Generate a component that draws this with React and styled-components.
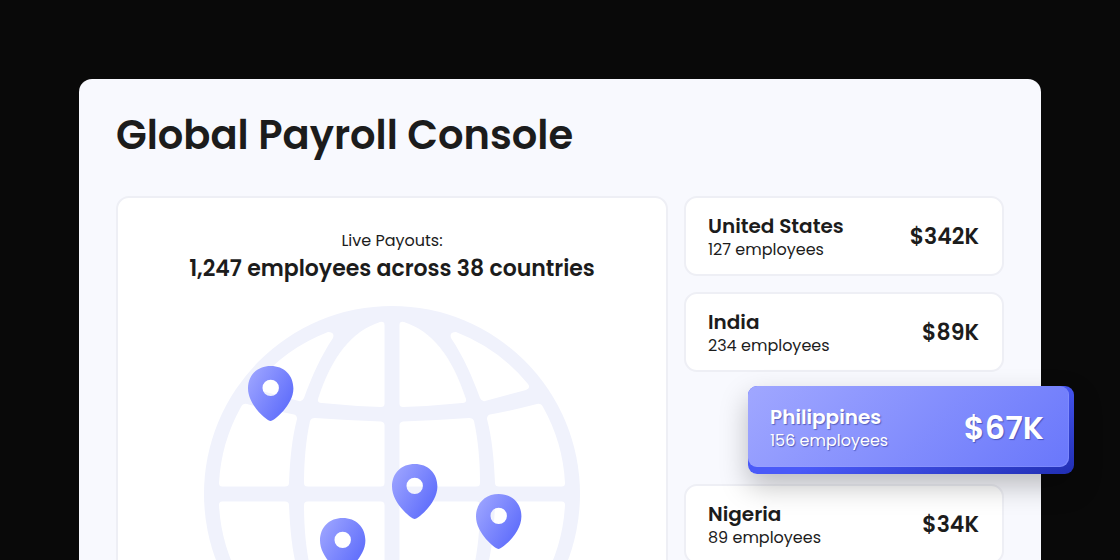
import React from "react";
import styled, { createGlobalStyle, css } from "styled-components";

const GlobalStyle = createGlobalStyle`
  * {
    box-sizing: border-box;
  }

  body {
    margin: 0;
    background: #090909;
    color: #1c1c1c;
    font-family: Poppins, Inter, "Open Sans", sans-serif;
  }
`;

const Page = styled.div`
  padding: 79px;
`;

const Console = styled.main`
  padding: 32px 37px 37px;
  border-radius: 13px;
  background: #f8f9fe;
`;

const Title = styled.h1`
  margin: 0 0 37px;
  font-size: 40px;
  font-weight: 600;
  line-height: 48px;
`;

const Columns = styled.div`
  display: grid;
  grid-template-columns: minmax(0, 1fr) 320px;
  gap: 16px;
`;

const box = css`
  border: 2px solid #eeeff5;
  border-radius: 13px;
  background: #fff;
`;

const Payouts = styled.section`
  ${box}
  display: flex;
  flex-direction: column;
  align-items: center;
  padding: 31px 24px;
`;

const PayoutsLabel = styled.p`
  margin: 0;
  font-size: 16px;
  line-height: 24px;
`;

const PayoutsTotal = styled.h2`
  margin: 0 0 21px;
  font-size: 22px;
  font-weight: 600;
  line-height: 32px;
`;

const WorldMap = styled.div`
  position: relative;
  width: 376px;
  height: 376px;

  > svg {
    display: block;
  }
`;

const PinIcon = styled.svg`
  position: absolute;
  left: ${(props) => props.$x}px;
  top: ${(props) => props.$y}px;
`;

const Countries = styled.ul`
  display: flex;
  flex-direction: column;
  gap: 16px;
  margin: 0;
  padding: 0;
  list-style: none;
`;

const Country = styled.li`
  ${box}
  display: flex;
  align-items: center;
  justify-content: space-between;
  height: 80px;
  padding: 2px 23px 0 22px;
`;

/* raised card, hangs out of the console on the right */
const Highlighted = styled.li`
  position: relative;
  height: 88px;
  margin: -2px -70px -6px 64px;
  padding: 0 5px 7px 0;
  border-radius: 9px;
  background: linear-gradient(160deg, #4a5af8 50%, #202eb2 100%);
  box-shadow: 0 12px 28px rgba(0, 0, 0, 0.25);
`;

const Face = styled.div`
  display: flex;
  align-items: center;
  justify-content: space-between;
  height: 100%;
  padding: 2px 25px 0 22px;
  border-radius: 9px;
  background: linear-gradient(135deg, #a0a7ff 0%, #6977fb 100%);
  box-shadow: inset -1px -1px 0 rgba(160, 170, 255, 0.3);
  color: #fff;
  text-shadow: 1px 1px 1px rgba(30, 40, 130, 0.5);
`;

const Name = styled.div`
  font-size: 20px;
  font-weight: 600;
  line-height: 26px;
`;

const Employees = styled.div`
  font-size: 16px;
  line-height: 22px;
`;

const Amount = styled.div`
  font-size: ${(props) => (props.$large ? 32 : 22)}px;
  font-weight: 600;
  line-height: 32px;
`;

const countries = [
  { name: "United States", employees: 127, amount: "$342K" },
  { name: "India", employees: 234, amount: "$89K" },
  { name: "Philippines", employees: 156, amount: "$67K", highlighted: true },
  { name: "Nigeria", employees: 89, amount: "$34K" },
];

const pins = [
  { x: 44, y: 60 },
  { x: 188, y: 158 },
  { x: 272, y: 188 },
  { x: 116, y: 212 },
];

const Globe = () => (
  <svg width="376" height="376" viewBox="-188 -188 376 376" aria-hidden="true">
    <defs>
      <g id="quarter" fill="#fff">
        <path d="M7.5-169Q7.5-173 12-172C40-163 60-138 74-95Q75-91 70-91Q40-88 11-87Q7.5-87 7.5-90Z" />
        <path d="M59-156Q57-162 64-162A173.5 173.5 0 0 1 136-110Q139-106 134-104L93-93Q90-92 88-96C80-118 71-138 59-156Z" />
        <path d="M7.5-69Q7.5-72 11-72.5Q45-74 77-76Q81-76 82-73C86-55 88-33 88-11Q88-7.5 84.5-7.5H11Q7.5-7.5 7.5-11Z" />
        <path d="M98-79.5Q122-84 145-90Q149-91 151-87A173.5 173.5 0 0 1 173-11Q173-7.5 170-7.5H107Q103-7.5 103-11C102-35 100-56 95-75Q95-79 98-79.5Z" />
      </g>
    </defs>
    <circle r="188" fill="#f0f2fc" />
    <use href="#quarter" />
    <use href="#quarter" transform="scale(-1 1)" />
    <use href="#quarter" transform="scale(1 -1)" />
    <use href="#quarter" transform="scale(-1 -1)" />
  </svg>
);

const Pin = ({ id, x, y }) => (
  <PinIcon $x={x} $y={y} width="46" height="56" viewBox="0 0 46 56" aria-hidden="true">
    <defs>
      <linearGradient id={id} x1="0" y1="0.1" x2="1" y2="0.8">
        <stop offset="0" stopColor="#9fa6ff" />
        <stop offset="1" stopColor="#5a69fb" />
      </linearGradient>
    </defs>
    <path
      fill={`url(#${id})`}
      fillRule="evenodd"
      d="M22.7 55C19 55 0 39 0 22.5C0 9 9.500 0 22.700 0S45.400 9 45.400 22.500C45.400 39 26 55 22.700 55ZM22.700 13.700a8.200 8.200 0 1 0 0 16.400a8.200 8.200 0 1 0 0-16.400Z"
    />
  </PinIcon>
);

const CountryInfo = ({ country }) => (
  <>
    <div>
      <Name>{country.name}</Name>
      <Employees>{country.employees} employees</Employees>
    </div>
    <Amount $large={country.highlighted}>{country.amount}</Amount>
  </>
);

const App = () => {
  return (
    <Page>
      <GlobalStyle />
      <Console>
        <Title>Global Payroll Console</Title>
        <Columns>
          <Payouts>
            <PayoutsLabel>Live Payouts:</PayoutsLabel>
            <PayoutsTotal>1,247 employees across 38 countries</PayoutsTotal>
            <WorldMap>
              <Globe />
              {pins.map((pin, i) => (
                <Pin key={i} id={`pin-${i}`} x={pin.x} y={pin.y} />
              ))}
            </WorldMap>
          </Payouts>
          <Countries>
            {countries.map((country) =>
              country.highlighted ? (
                <Highlighted key={country.name}>
                  <Face>
                    <CountryInfo country={country} />
                  </Face>
                </Highlighted>
              ) : (
                <Country key={country.name}>
                  <CountryInfo country={country} />
                </Country>
              )
            )}
          </Countries>
        </Columns>
      </Console>
    </Page>
  );
};

export default App;
